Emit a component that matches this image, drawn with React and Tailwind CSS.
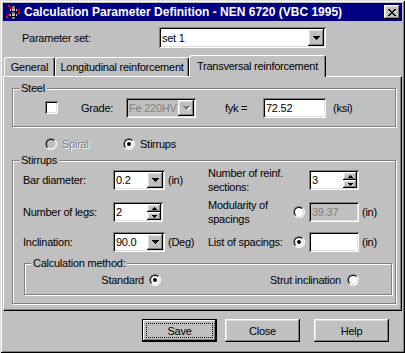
import React from 'react';

const raised =
  'shadow-[inset_-1px_-1px_#000,inset_1px_1px_#fff,inset_-2px_-2px_#808080,inset_2px_2px_#dfdfdf]';
const sunken =
  'shadow-[inset_1px_1px_#808080,inset_-1px_-1px_#fff,inset_2px_2px_#000,inset_-2px_-2px_#dfdfdf]';
const disabledText = 'text-[#808080] [text-shadow:1px_1px_0_#fff]';

const DownArrow = ({ color = '#000' }) => (
  <svg width="7" height="4" viewBox="0 0 7 4" shapeRendering="crispEdges">
    <rect x="0" y="0" width="7" height="1" fill={color} />
    <rect x="1" y="1" width="5" height="1" fill={color} />
    <rect x="2" y="2" width="3" height="1" fill={color} />
    <rect x="3" y="3" width="1" height="1" fill={color} />
  </svg>
);

const UpArrow = () => (
  <svg width="5" height="3" viewBox="0 0 5 3" shapeRendering="crispEdges">
    <rect x="2" y="0" width="1" height="1" fill="#000" />
    <rect x="1" y="1" width="3" height="1" fill="#000" />
    <rect x="0" y="2" width="5" height="1" fill="#000" />
  </svg>
);

const SmallDown = () => (
  <svg width="5" height="3" viewBox="0 0 5 3" shapeRendering="crispEdges">
    <rect x="0" y="0" width="5" height="1" fill="#000" />
    <rect x="1" y="1" width="3" height="1" fill="#000" />
    <rect x="2" y="2" width="1" height="1" fill="#000" />
  </svg>
);

const Combo = ({ value, className = '', disabled }) => (
  <div className={`flex p-[2px] ${sunken} ${disabled ? 'bg-[#c0c0c0]' : 'bg-white'} ${className}`}>
    <span
      className={`flex-1 min-w-0 overflow-hidden whitespace-nowrap pl-[1px] flex items-center ${
        disabled ? 'text-[#808080]' : ''
      }`}
    >
      {value}
    </span>
    <div className={`w-[16px] h-full bg-[#c0c0c0] flex items-center justify-center ${raised}`}>
      {disabled ? (
        <div className="relative">
          <div className="absolute left-[1px] top-[1px]">
            <DownArrow color="#fff" />
          </div>
          <div className="relative">
            <DownArrow color="#808080" />
          </div>
        </div>
      ) : (
        <DownArrow />
      )}
    </div>
  </div>
);

const Spin = ({ value, className = '' }) => (
  <div className={`flex p-[2px] bg-white ${sunken} ${className}`}>
    <span className="flex-1 pl-[1px] flex items-center">{value}</span>
    <div className="w-[14px] h-full flex flex-col">
      <div className={`flex-1 bg-[#c0c0c0] flex items-center justify-center ${raised}`}>
        <UpArrow />
      </div>
      <div className={`flex-1 bg-[#c0c0c0] flex items-center justify-center ${raised}`}>
        <SmallDown />
      </div>
    </div>
  </div>
);

const Field = ({ value, className = '', disabled }) => (
  <div
    className={`flex items-center pl-[3px] ${sunken} ${
      disabled ? 'bg-[#c0c0c0] text-[#808080]' : 'bg-white'
    } ${className}`}
  >
    {value}
  </div>
);

const Radio = ({ checked, disabled }) => (
  <div className="w-[12px] h-[12px] shrink-0 rounded-full border border-t-[#808080] border-l-[#808080] border-b-white border-r-white">
    <div
      className={`w-full h-full rounded-full border border-t-black border-l-black border-b-[#dfdfdf] border-r-[#dfdfdf] flex items-center justify-center ${
        disabled ? 'bg-[#c0c0c0]' : 'bg-white'
      }`}
    >
      {checked && <div className="w-[4px] h-[4px] rounded-full bg-black" />}
    </div>
  </div>
);

const Group = ({ label, className = '', children }) => (
  <div
    className={`relative border border-[#808080] shadow-[1px_1px_0_#fff,inset_1px_1px_0_#fff] ${className}`}
  >
    <span className="absolute -top-[8px] left-[6px] bg-[#c0c0c0] px-[2px] leading-[14px]">{label}</span>
    {children}
  </div>
);

const Button = ({ children, isDefault, className = '' }) => (
  <div
    className={`relative w-[75px] h-[23px] flex items-center justify-center bg-[#c0c0c0] ${
      isDefault
        ? 'border border-black shadow-[inset_-1px_-1px_#000,inset_1px_1px_#fff,inset_-2px_-2px_#808080]'
        : raised
    } ${className}`}
  >
    {isDefault && <div className="absolute inset-[3px] border border-dotted border-black" />}
    <span className="relative">{children}</span>
  </div>
);

const AppIcon = () => (
  <svg width="16" height="16" viewBox="0 0 16 16" shapeRendering="crispEdges">
    <rect x="6" y="2" width="5" height="13" fill="#808080" />
    <rect x="5" y="5" width="7" height="2" fill="#c0c0c0" />
    <rect x="5" y="10" width="7" height="2" fill="#c0c0c0" />
    <rect x="6" y="2" width="1" height="13" fill="#000" />
    <rect x="10" y="2" width="1" height="13" fill="#000" />
    <rect x="4" y="7" width="9" height="1" fill="#000" />
    <rect x="4" y="12" width="9" height="1" fill="#000" />
    <rect x="3" y="1" width="2" height="2" fill="#ff0000" />
    <rect x="5" y="3" width="1" height="2" fill="#ff0000" />
    <rect x="12" y="6" width="3" height="1" fill="#ff0000" />
    <rect x="13" y="8" width="2" height="2" fill="#ff0000" />
    <rect x="1" y="12" width="2" height="2" fill="#ff0000" />
    <rect x="3" y="10" width="2" height="2" fill="#ff0000" />
  </svg>
);

const CloseGlyph = () => (
  <svg width="8" height="7" viewBox="0 0 8 7" shapeRendering="crispEdges">
    <rect x="0" y="0" width="2" height="1" fill="#000" />
    <rect x="6" y="0" width="2" height="1" fill="#000" />
    <rect x="1" y="1" width="2" height="1" fill="#000" />
    <rect x="5" y="1" width="2" height="1" fill="#000" />
    <rect x="2" y="2" width="4" height="1" fill="#000" />
    <rect x="3" y="3" width="2" height="1" fill="#000" />
    <rect x="2" y="4" width="4" height="1" fill="#000" />
    <rect x="1" y="5" width="2" height="1" fill="#000" />
    <rect x="5" y="5" width="2" height="1" fill="#000" />
    <rect x="0" y="6" width="2" height="1" fill="#000" />
    <rect x="6" y="6" width="2" height="1" fill="#000" />
  </svg>
);

export default function App() {
  return (
    <div
      className="w-[405px] h-[353px] bg-[#c0c0c0] flex flex-col text-black text-[11px] tracking-[-0.25px] leading-[14px] font-['Liberation_Sans',Arial,sans-serif] shadow-[inset_1px_1px_#dfdfdf,inset_-1px_-1px_#000,inset_2px_2px_#fff,inset_-2px_-2px_#808080] overflow-hidden"
    >
      {/* Title bar */}
      <div className="mx-[3px] mt-[3px] h-[18px] bg-[#000080] flex items-center">
        <div className="ml-[2px]">
          <AppIcon />
        </div>
        <span className="ml-[3px] text-white font-bold text-[12px] tracking-normal">
          Calculation Parameter Definition - NEN 6720 (VBC 1995)
        </span>
        <div className={`ml-auto mr-[2px] w-[16px] h-[14px] bg-[#c0c0c0] flex items-center justify-center ${raised}`}>
          <CloseGlyph />
        </div>
      </div>

      {/* Parameter set */}
      <div className="mt-[6px] flex items-center h-[21px]">
        <span className="ml-[22px] w-[137px]">Parameter set:</span>
        <Combo value="set 1" className="w-[167px] h-[21px]" />
      </div>

      {/* Tabs */}
      <div className="mt-[7px] ml-[4px] h-[21px] flex items-end">
        <div className="w-[51px] h-[19px] flex items-center justify-center border-l border-t border-white border-r border-r-black rounded-t-[3px] shadow-[inset_-1px_0_#808080]">
          General
        </div>
        <div className="w-[134px] h-[19px] flex items-center justify-center border-l border-t border-white border-r border-r-black rounded-t-[3px] shadow-[inset_-1px_0_#808080]">
          Longitudinal reinforcement
        </div>
        <div className="relative z-10 -mb-[1px] w-[137px] h-[22px] pb-[2px] bg-[#c0c0c0] flex items-center justify-center border-l border-t border-white border-r border-r-black rounded-t-[3px] shadow-[inset_-1px_0_#808080]">
          Transversal reinforcement
        </div>
      </div>

      {/* Tab panel */}
      <div className="mx-[3px] h-[235px] border border-white border-r-black border-b-black shadow-[inset_-1px_-1px_#808080] flex flex-col">
        <Group label="Steel" className="ml-[8px] mt-[11px] w-[384px] h-[39px] shrink-0">
          <div className="h-full flex items-center">
            <div className={`ml-[32px] w-[13px] h-[13px] bg-white ${sunken}`} />
            <span className="ml-[23px] w-[45px]">Grade:</span>
            <Combo value="Fe 220HV" disabled className="w-[70px] h-[20px]" />
            <span className="ml-[29px] w-[38px]">fyk =</span>
            <Field value="72.52" className="w-[63px] h-[20px]" />
            <span className="ml-[7px]">(ksi)</span>
          </div>
        </Group>

        <div className="mt-[10px] h-[14px] flex items-center">
          <div className="ml-[41px] flex items-center gap-[5px]">
            <Radio disabled />
            <span className={`w-[61px] ${disabledText}`}>Spiral</span>
          </div>
          <div className="flex items-center gap-[5px]">
            <Radio checked />
            <span>Stirrups</span>
          </div>
        </div>

        <Group label="Stirrups" className="ml-[8px] mt-[9px] w-[384px] h-[144px] shrink-0">
          <div className="pl-[10px] flex flex-col">
            <div className="mt-[9px] h-[20px] flex items-center">
              <span className="w-[90px]">Bar diameter:</span>
              <Combo value="0.2" className="w-[52px] h-[20px]" />
              <span className="ml-[3px] w-[40px]">(in)</span>
              <span className="w-[85px] leading-[14px]">
                Number of reinf.
                <br />
                sections:
              </span>
              <span className="w-[16px]" />
              <Spin value="3" className="w-[50px] h-[20px]" />
            </div>

            <div className="mt-[12px] h-[20px] flex items-center">
              <span className="w-[90px]">Number of legs:</span>
              <Spin value="2" className="w-[50px] h-[20px]" />
              <span className="ml-[5px] w-[40px]" />
              <span className="w-[85px] leading-[14px]">
                Modularity of
                <br />
                spacings
              </span>
              <span className="w-[16px] flex items-center">
                <Radio />
              </span>
              <Field value="39.37" disabled className="w-[50px] h-[20px]" />
              <span className="ml-[3px]">(in)</span>
            </div>

            <div className="mt-[10px] h-[20px] flex items-center">
              <span className="w-[90px]">Inclination:</span>
              <Combo value="90.0" className="w-[52px] h-[20px]" />
              <span className="ml-[3px] w-[40px]">(Deg)</span>
              <span className="w-[85px]">List of spacings:</span>
              <span className="w-[16px] flex items-center">
                <Radio checked />
              </span>
              <Field value="" className="w-[50px] h-[20px]" />
              <span className="ml-[3px]">(in)</span>
            </div>

            <Group label="Calculation method:" className="ml-[1px] mt-[11px] w-[368px] h-[32px]">
              <div className="h-full flex items-center pt-[2px]">
                <div className="ml-[75px] flex items-center gap-[5px]">
                  <span className="w-[44px] text-right">Standard</span>
                  <Radio checked />
                </div>
                <div className="ml-auto mr-[32px] flex items-center gap-[6px]">
                  <span>Strut inclination</span>
                  <Radio />
                </div>
              </div>
            </Group>
          </div>
        </Group>
      </div>

      {/* Buttons */}
      <div className="mt-[8px] flex items-center">
        <Button isDefault className="ml-[142px]">
          Save
        </Button>
        <Button className="ml-[8px]">Close</Button>
        <Button className="ml-[14px]">Help</Button>
      </div>
    </div>
  );
}
